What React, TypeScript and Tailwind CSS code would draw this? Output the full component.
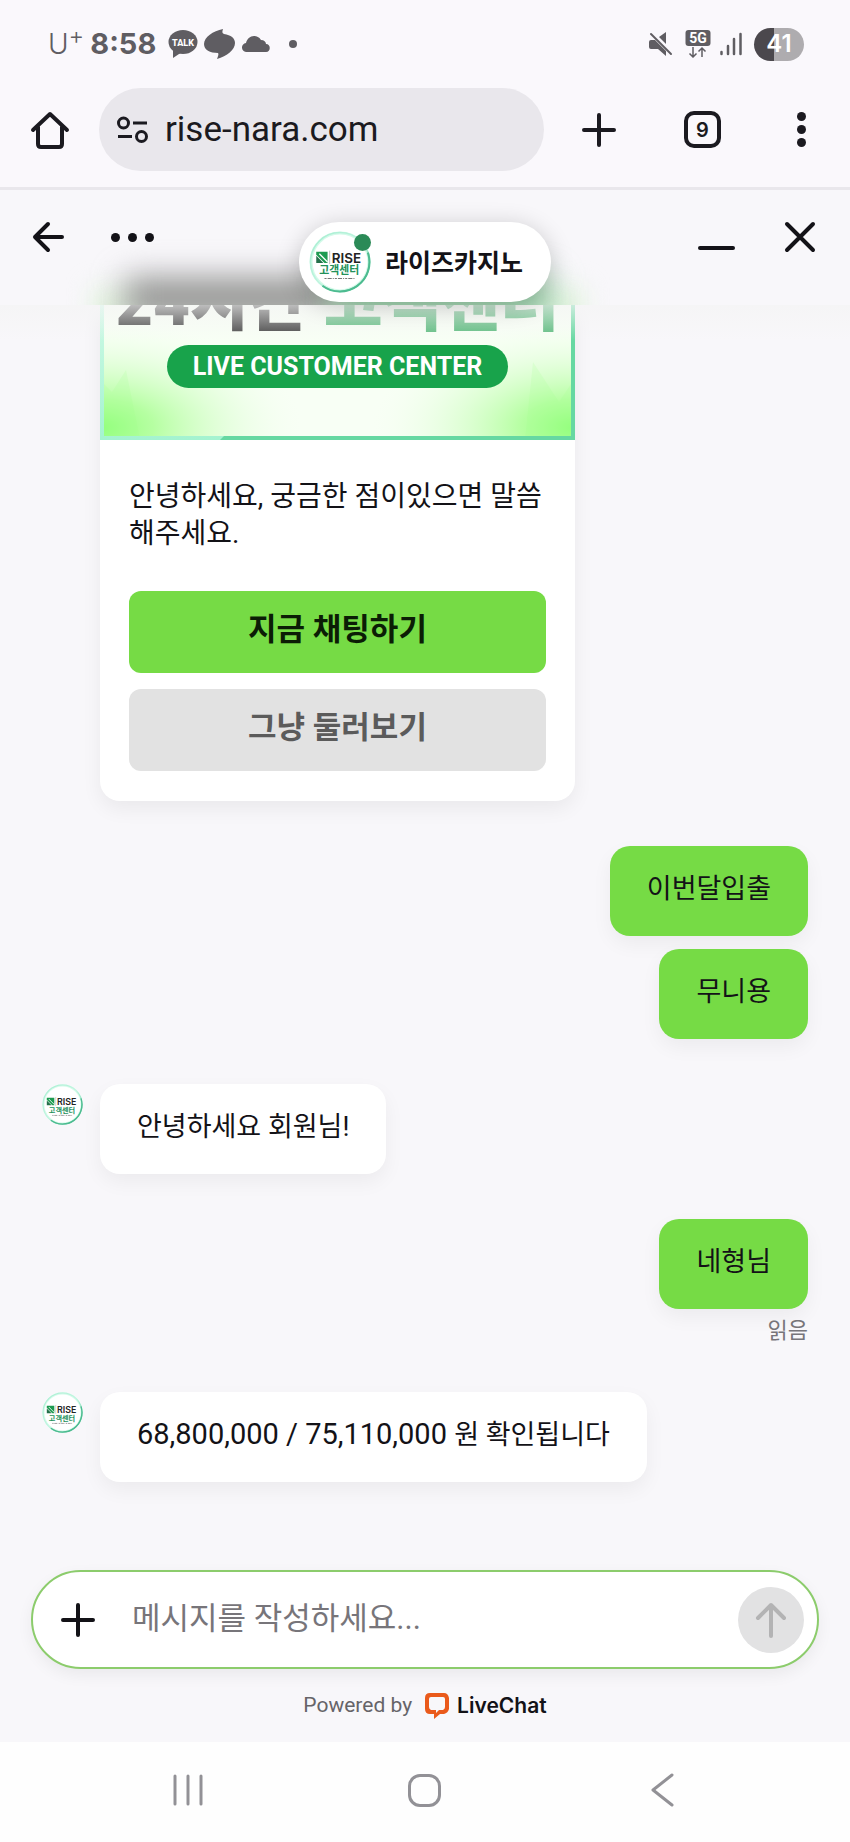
import type { ReactNode } from "react";

type Message = {
  id: number;
  from: "agent" | "me";
  body: ReactNode;
  read?: boolean;
  tight?: boolean;
};

const messages: Message[] = [
  { id: 1, from: "me", body: "이번달입출" },
  { id: 2, from: "me", body: "무니용", tight: true },
  { id: 3, from: "agent", body: "안녕하세요 회원님!" },
  { id: 4, from: "me", body: "네형님", read: true },
  {
    id: 5,
    from: "agent",
    body: (
      <>
        <span className="text-[29px] leading-none">68,800,000 / 75,110,000 </span>원 확인됩니다
      </>
    ),
  },
];

function RiseLogo({ className }: { className: string }) {
  return (
    <svg viewBox="0 0 60 60" className={className} role="img" aria-label="RISE 고객센터">
      <defs>
        <linearGradient id="ring" x1="0" y1="0" x2="1" y2="1">
          <stop offset="0" stopColor="#a5ecd0" />
          <stop offset="0.5" stopColor="#bff5df" />
          <stop offset="1" stopColor="#3fb98a" />
        </linearGradient>
      </defs>
      <circle cx="30" cy="30" r="29" fill="#fff" />
      <circle cx="30" cy="30" r="28" fill="none" stroke="#d5faea" strokeWidth="3" />
      <circle cx="30" cy="30" r="28.5" fill="none" stroke="url(#ring)" strokeWidth="1.5" />
      <path d="M57 21a28.5 28.5 0 0 1-44 32" fill="none" stroke="#4dbb90" strokeWidth="2" />
      <path d="M7 20h11v11h-3l-8-8z" fill="#1d9a50" />
      <path d="M7 24l7 7H7z" fill="#23704a" />
      <path d="M10 22l8 8" stroke="#fff" strokeWidth="1.2" />
      <path d="M20 19v13" stroke="#9a9a9a" strokeWidth="0.6" />
      <text x="22" y="31" fontSize="13" fontWeight="600" fill="#232323" fontFamily="Inter, sans-serif">
        RISE
      </text>
      <text x="10" y="42" fontSize="10.500" fontWeight="700" fill="#23915a" fontFamily="'Noto Sans CJK KR', sans-serif">
        고객센터
      </text>
      <path d="M15 46h30" stroke="#777" strokeWidth="1" strokeDasharray="2 1 4 1 1 1" />
    </svg>
  );
}

function StatusBar() {
  return (
    <div className="flex h-[88px] items-center justify-between pl-12 pr-[46px] text-[#5f5d62]">
      <div className="flex items-center">
        <span className="flex items-start text-[28px] font-light leading-8">
          U<span className="text-2xl leading-4">+</span>
        </span>
        <span className="ml-[6px] text-[29px] font-bold leading-8">8:58</span>
        <svg viewBox="0 0 30 28" className="ml-3 h-7 w-[30px]">
          <ellipse cx="15" cy="12" rx="14.500" ry="12" fill="currentColor" />
          <path d="M5 19v9l9-6z" fill="currentColor" />
          <text x="15" y="15.500" textAnchor="middle" fontSize="9" fontWeight="800" fill="#fff" fontFamily="Roboto, sans-serif">
            TALK
          </text>
        </svg>
        <svg viewBox="0 0 32 30" className="ml-[6px] h-[30px] w-8" fill="currentColor">
          <path d="M19 0c-1 3-1 4 1 5 7 1 11 4 11 9 0 7-8 13-18 16 1-3 2-5 1-6C6 24 0 21 0 15 0 8 9 2 19 0z" />
        </svg>
        <svg viewBox="0 0 28 18" className="ml-[6px] h-[18px] w-7" fill="currentColor">
          <path d="M5 17a4.500 4.500 0 0 1-1-9c1-4 4-7 8-7 3 0 5 1 7 4 3 0 5 2 5 4 5 0 5 8 0 8z" />
        </svg>
        <span className="ml-[19px] h-2 w-2 rounded-full bg-current" />
      </div>

      <div className="flex items-center">
        <svg viewBox="0 0 24 24" className="h-6 w-6" fill="currentColor">
          <path d="M2 8h4l11 11v5l-8-7H2q-2 0-2-2v-5q0-2 2-2z" />
          <path d="M10 5l7-5v12z" />
          <path d="M2 2l20 20" stroke="currentColor" strokeWidth="2" strokeLinecap="round" />
        </svg>
        <svg viewBox="0 0 26 28" className="ml-3 h-7 w-[26px]">
          <rect width="25" height="16" x="0.500" rx="3" fill="currentColor" />
          <text x="13" y="13" textAnchor="middle" fontSize="14" fontWeight="700" fill="#fff" fontFamily="Roboto, sans-serif">
            5G
          </text>
          <path d="M8 17v10M4.500 23.500L8 27l3.500-3.500M17 27V18M13.500 21.500L17 18l3.500 3.500" fill="none" stroke="currentColor" strokeWidth="1.500" />
        </svg>
        <svg viewBox="0 0 22 24" className="ml-[9px] h-6 w-[22px]" stroke="currentColor" strokeWidth="2.500" strokeLinecap="round">
          <path d="M1.500 20v2M8 14v8M14 7v15M20.500 2v20" />
        </svg>
        <span className="ml-3 flex h-[33px] w-[50px] items-center justify-center rounded-full bg-linear-to-r from-[#4b484d] from-40% to-[#aeacaf] to-40% text-2xl font-semibold text-white">
          41
        </span>
      </div>
    </div>
  );
}

function BrowserBar() {
  return (
    <div className="flex items-center border-b-[3px] border-[#e9e7ec] pb-4 pl-[30px] pr-11 text-[#1b1a20]">
      <button aria-label="Home" className="h-10 w-10">
        <svg viewBox="0 0 40 40" fill="none" stroke="currentColor" strokeWidth="4" strokeLinecap="round" strokeLinejoin="round">
          <path d="M3 20L20 4l17 16M8 17v17q0 3 3 3h18q3 0 3-3V17" />
        </svg>
      </button>
      <div className="ml-[29px] flex h-[83px] flex-1 items-center rounded-full bg-[#e9e7ec] pl-[17px]">
        <svg viewBox="0 0 32 28" className="h-7 w-8 shrink-0" fill="none" stroke="currentColor" strokeWidth="3">
          <circle cx="7.500" cy="7" r="5" />
          <path d="M17 7h14M2 20.500h14" />
          <circle cx="25.500" cy="20.500" r="5" />
        </svg>
        <input
          aria-label="Address"
          defaultValue="rise-nara.com"
          className="ml-[17px] w-full min-w-0 bg-transparent pt-[2px] font-[Roboto,sans-serif] text-[35px] outline-none"
        />
      </div>
      <button aria-label="New tab" className="ml-[37px] h-9 w-9">
        <svg viewBox="0 0 36 36" stroke="currentColor" strokeWidth="4" strokeLinecap="round">
          <path d="M18 3v30M3 18h30" />
        </svg>
      </button>
      <button aria-label="Tabs" className="ml-[67px] flex h-[37px] w-[37px] items-center justify-center rounded-[10px] border-4 border-current text-xl font-semibold">
        9
      </button>
      <button aria-label="Menu" className="ml-[75px] flex h-10 w-[10px] flex-col items-center justify-center gap-1">
        <span className="h-[9px] w-[9px] rounded-full bg-current" />
        <span className="h-[9px] w-[9px] rounded-full bg-current" />
        <span className="h-[9px] w-[9px] rounded-full bg-current" />
      </button>
    </div>
  );
}

function ChatHeader() {
  return (
    <header className="relative z-10 h-[115px] text-[#131217]">
      {/* frosted glass: colours of the banner bleeding up under the header */}
      <div className="absolute inset-0 overflow-hidden">
        <div className="absolute left-[92px] top-[98px] h-12 w-[492px] bg-[#e4f4e0] blur-[12px]" />
        <div className="absolute left-[125px] top-[88px] h-10 w-[210px] bg-[#949294] blur-[16px]" />
        <div className="absolute left-[335px] top-[88px] h-10 w-[215px] bg-[#8fcba3] blur-[16px]" />
      </div>
      <div className="absolute inset-x-0 top-full h-9 bg-linear-to-b from-[#f4f4f4]/70 to-[#faf8fc]/0" />
      <div className="relative flex h-[94px] items-center pl-8 pr-[34px]">
        <button aria-label="Back" className="h-8 w-8">
          <svg viewBox="0 0 32 32" fill="none" stroke="currentColor" strokeWidth="4" strokeLinecap="round" strokeLinejoin="round">
            <path d="M30 16H3M16 3L3 16l13 13" />
          </svg>
        </button>
        <button aria-label="More" className="ml-[47px] flex h-8 items-center gap-2">
          <span className="h-[9px] w-[9px] rounded-full bg-current" />
          <span className="h-[9px] w-[9px] rounded-full bg-current" />
          <span className="h-[9px] w-[9px] rounded-full bg-current" />
        </button>
        <button aria-label="Minimize" className="ml-auto flex h-8 w-[37px] items-end pb-[3px]">
          <span className="h-1 w-full rounded-full bg-current" />
        </button>
        <button aria-label="Close" className="ml-[49px] h-8 w-8">
          <svg viewBox="0 0 32 32" stroke="currentColor" strokeWidth="4" strokeLinecap="round">
            <path d="M3 3l26 26M29 3L3 29" />
          </svg>
        </button>
      </div>
      <div className="absolute left-1/2 top-8 flex h-20 -translate-x-1/2 items-center whitespace-nowrap rounded-full bg-white pl-[10px] pr-7 shadow-[0_4px_24px_rgba(0,0,0,0.2)]">
        <div className="relative">
          <RiseLogo className="h-[62px] w-[62px]" />
          <span className="absolute right-0 top-[3px] h-[17px] w-[17px] rounded-full bg-[#2b8a57]" />
        </div>
        <h1 className="ml-[14px] pt-1 text-[25px] font-bold leading-8">라이즈카지노</h1>
      </div>
    </header>
  );
}

function Banner() {
  return (
    <div className="relative flex h-[135px] flex-col items-center justify-end overflow-hidden pb-[52px]">
      <svg viewBox="0 115 475 135" preserveAspectRatio="none" className="absolute inset-0 h-full w-full">
        <defs>
          <radialGradient id="glowLeft" cx="0" cy="0.950" r="0.450">
            <stop offset="0" stopColor="#93ff7c" />
            <stop offset="0.250" stopColor="#b6ffa2" />
            <stop offset="1" stopColor="#fdfffc" stopOpacity="0" />
          </radialGradient>
          <radialGradient id="glowRight" cx="1" cy="0.950" r="0.450">
            <stop offset="0" stopColor="#93ff7c" />
            <stop offset="0.250" stopColor="#b6ffa2" />
            <stop offset="1" stopColor="#fdfffc" stopOpacity="0" />
          </radialGradient>
          <linearGradient id="edge" x1="0" y1="0" x2="0" y2="1">
            <stop offset="0" stopColor="#dffbee" />
            <stop offset="1" stopColor="#a4f3d0" />
          </linearGradient>
        </defs>
        <rect width="475" height="250" fill="#f8fff5" />
        <rect width="475" height="250" fill="url(#glowLeft)" />
        <rect width="475" height="250" fill="url(#glowRight)" />
        <path d="M0 190l12 12L26 180l14 70H0z" fill="#9dff85" opacity="0.150" />
        <path d="M475 188l-16 24-26-40-8 78h50z" fill="#9dff85" opacity="0.150" />
        <path d="M0 60h4v186h126v4H0z" fill="url(#edge)" />
        <path d="M120 250l4-4h347V60h4v190z" fill="#66d8a2" />
      </svg>
      <div className="relative whitespace-nowrap text-[64px] font-black leading-[70px] text-[#3c3c3c]">
        24시간 <span className="text-[#55b878]">고객센터</span>
      </div>
      <div className="relative mt-[6px] flex h-[43px] shrink-0 items-center whitespace-nowrap rounded-full bg-[#18a34b] px-[26px] text-[25px] font-bold text-white">
        LIVE CUSTOMER CENTER
      </div>
    </div>
  );
}

function WelcomeCard() {
  return (
    <section className="ml-[100px] w-[475px] overflow-hidden rounded-b-[20px] bg-white shadow-[0_8px_20px_rgba(0,0,0,0.06)]">
      <Banner />
      <div className="px-[29px] pb-[30px] pt-[38px]">
        <p className="break-all text-[28px] leading-[37px]">안녕하세요, 궁금한 점이있으면 말씀해주세요.</p>
        <div className="mt-[39px] flex flex-col gap-4 text-[31px] font-bold">
          <button className="h-[82px] rounded-xl bg-[#76db45] pb-1 text-[#0b1d05]">지금 채팅하기</button>
          <button className="h-[82px] rounded-xl bg-[#e2e2e2] pb-1 text-[#5b5b5b]">그냥 둘러보기</button>
        </div>
      </div>
    </section>
  );
}

function Bubble({ color, children }: { color: string; children: ReactNode }) {
  return (
    <p className={`rounded-[20px] px-[37px] pb-7 pt-[25px] text-[27px] leading-[37px] shadow-[0_8px_20px_rgba(0,0,0,0.05)] ${color}`}>
      {children}
    </p>
  );
}

function MessageRow({ message }: { message: Message }) {
  if (message.from === "agent") {
    return (
      <li className="mt-[45px] flex items-start gap-[17px] pl-[42px]">
        <RiseLogo className="h-[41px] w-[41px]" />
        <Bubble color="bg-white">{message.body}</Bubble>
      </li>
    );
  }
  return (
    <li className={`flex flex-col items-end pr-[42px] ${message.tight ? "mt-[13px]" : "mt-[45px]"}`}>
      <Bubble color="bg-[#76db45]">{message.body}</Bubble>
      {message.read && <span className="mt-[6px] text-[22px] leading-8 text-[#77757a]">읽음</span>}
    </li>
  );
}

function Composer() {
  return (
    <form className="mx-[31px] flex h-[99px] items-center rounded-full border-2 border-[#8ccc6c] bg-white pl-[27px] pr-[13px] shadow-[0_6px_16px_rgba(0,0,0,0.06)]">
      <button type="button" aria-label="Attach" className="h-9 w-9">
        <svg viewBox="0 0 36 36" stroke="#131217" strokeWidth="4" strokeLinecap="round">
          <path d="M18 3v30M3 18h30" />
        </svg>
      </button>
      <input
        aria-label="메시지"
        placeholder="메시지를 작성하세요..."
        className="ml-9 min-w-0 flex-1 bg-transparent text-[31px] outline-none placeholder:text-[#77757a]"
      />
      <button type="button" aria-label="Send" className="flex h-[66px] w-[66px] items-center justify-center rounded-full bg-[#e2e2e3]">
        <svg viewBox="0 0 32 36" className="h-9 w-8" fill="none" stroke="#b3b3b4" strokeWidth="4" strokeLinecap="round" strokeLinejoin="round">
          <path d="M16 34V3M3 16L16 3l13 13" />
        </svg>
      </button>
    </form>
  );
}

function PoweredBy() {
  return (
    <div className="flex h-[73px] items-center justify-center text-[21px]">
      <span className="text-[#666468]">Powered by</span>
      <a href="#livechat" className="ml-3 flex items-center gap-2 font-[Inter,sans-serif] font-semibold text-[#131217]">
        <svg viewBox="0 0 25 26" className="h-[26px] w-[25px]">
          <path
            d="M6 0Q1 0 1 5v11q0 5 5 5h4v5l6-5h4q4-1 5-5V5q-1-5-5-5zM7 4h12q2 0 2 2v8q0 2-2 3h-4l-3 3v-3H7q-2-1-2-3V6q0-2 2-2z"
            fill="#ea5a1b"
            fillRule="evenodd"
          />
        </svg>
        LiveChat
      </a>
    </div>
  );
}

function SystemNav() {
  return (
    <nav className="grid h-[100px] grid-cols-3 items-center bg-[#fefefe] px-[69px] pb-1 text-[#929196]">
      <button aria-label="Recents" className="mx-auto h-9 w-9">
        <svg viewBox="0 0 36 36" stroke="currentColor" strokeWidth="3" strokeLinecap="round">
          <path d="M5 4v28M18 4v28M31 4v28" />
        </svg>
      </button>
      <button aria-label="Home screen" className="mx-auto h-[33px] w-[33px] rounded-xl border-[3px] border-current" />
      <button aria-label="Go back" className="mx-auto h-9 w-6">
        <svg viewBox="0 0 24 36" fill="none" stroke="currentColor" strokeWidth="3" strokeLinecap="round" strokeLinejoin="round">
          <path d="M22 3L3 18l19 15" />
        </svg>
      </button>
    </nav>
  );
}

export default function App() {
  return (
    <div className="flex min-h-screen flex-col bg-[#faf8fc] font-[Inter,'Noto_Sans_CJK_KR',sans-serif] text-[#131217]">
      <StatusBar />
      <BrowserBar />
      <main className="flex flex-1 flex-col bg-[#f8f7fa] font-[Roboto,'Noto_Sans_CJK_KR',sans-serif]">
        <ChatHeader />
        <div className="flex-1 pb-20">
          <WelcomeCard />
          <ul>
            {messages.map((m) => (
              <MessageRow key={m.id} message={m} />
            ))}
          </ul>
        </div>
        <Composer />
        <PoweredBy />
      </main>
      <SystemNav />
    </div>
  );
}
